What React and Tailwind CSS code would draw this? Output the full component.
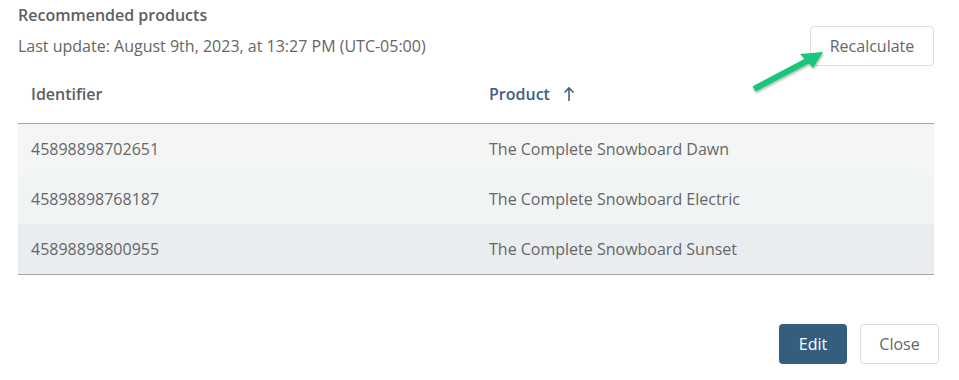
export default function App() {
  const rows = [
    { id: "45898898702651", name: "The Complete Snowboard Dawn", bg: "bg-[#f4f6f6]" },
    { id: "45898898768187", name: "The Complete Snowboard Electric", bg: "bg-[#f1f4f5]" },
    { id: "45898898800955", name: "The Complete Snowboard Sunset", bg: "bg-[#e9edf0]" },
  ];

  return (
    <div className="relative w-[959px] h-[380px] bg-white font-['Open_Sans',sans-serif] text-[#666]">
      {/* Header */}
      <div className="flex h-[66px] items-start justify-between pl-[18px] pr-[25px] pt-[4px]">
        <div>
          <div className="text-[16px] font-semibold text-[#5e5e5e] leading-[22px]">Recommended products</div>
          <div className="mt-[9px] text-[16px] leading-[22px] text-[#666]">
            Last update: August 9th, 2023, at 13:27 PM (UTC-05:00)
          </div>
        </div>
        <button className="mt-[22px] h-[40px] w-[124px] rounded-[4px] border border-[#dcdee2] bg-white text-[16px] text-[#666]">
          Recalculate
        </button>
      </div>

      {/* Table */}
      <div className="mx-[18px] mt-[5px] w-[916px]">
        <div className="flex h-[53px] items-start border-b border-[#a6a6a6] pt-[12px] text-[16px] font-semibold leading-[22px]">
          <div className="w-[471px] pl-[13px] text-[#5e5e5e]">Identifier</div>
          <div className="flex items-center gap-[13px] text-[#3f6182]">
            Product
            <svg width="12" height="16" viewBox="0 0 12 16" fill="none" stroke="#3f6182" strokeWidth="1.6">
              <path d="M6 15V2M1.5 6.5L6 2l4.5 4.5" />
            </svg>
          </div>
        </div>
        {rows.map((r) => (
          <div key={r.id} className={`flex h-[50px] items-center text-[16px] text-[#666] ${r.bg}`}>
            <div className="w-[471px] pl-[13px]">{r.id}</div>
            <div>{r.name}</div>
          </div>
        ))}
        <div className="h-px bg-[#a6a6a6]" />
      </div>

      {/* Footer buttons */}
      <div className="mt-[49px] flex justify-end gap-[13px] pr-[20px]">
        <button className="h-[40px] w-[68px] rounded-[4px] bg-[#345e80] text-[16px] text-white">Edit</button>
        <button className="h-[40px] w-[79px] rounded-[4px] border border-[#dcdee2] bg-white text-[16px] text-[#666]">
          Close
        </button>
      </div>

      {/* Green annotation arrow */}
      <svg className="absolute left-[745px] top-[45px]" width="90" height="55" viewBox="0 0 90 55">
        <defs>
          <filter id="sh" x="-20%" y="-20%" width="140%" height="140%">
            <feDropShadow dx="1" dy="1.5" stdDeviation="1.2" floodColor="#000" floodOpacity="0.3" />
          </filter>
        </defs>
        <g filter="url(#sh)">
          <path d="M9 44L64 15" stroke="#17c77b" strokeWidth="6" strokeLinecap="butt" />
          <path d="M78 7L55 9L68 23Z" fill="#17c77b" />
        </g>
      </svg>
    </div>
  );
}
